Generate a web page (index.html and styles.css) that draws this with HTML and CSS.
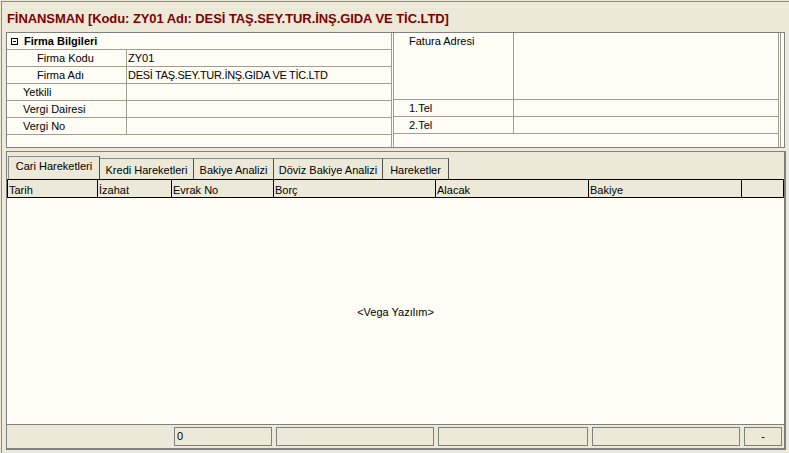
FILE: index.html
```html
<!DOCTYPE html>
<html lang="tr">
<head>
<meta charset="utf-8">
<title>Finansman</title>
<link rel="stylesheet" href="styles.css">
</head>
<body>
<div class="window">
  <div class="title">FİNANSMAN [Kodu: ZY01 Adı: DESİ TAŞ.SEY.TUR.İNŞ.GIDA VE TİC.LTD]</div>
  <div class="info">
    <div class="pgrid pleft">
      <div class="cat"><span class="tog"></span>Firma Bilgileri</div>
      <div class="row"><div class="lab sub">Firma Kodu</div><div class="val">ZY01</div></div>
      <div class="row"><div class="lab sub">Firma Adı</div><div class="val caps">DESİ TAŞ.SEY.TUR.İNŞ.GIDA VE TİC.LTD</div></div>
      <div class="row"><div class="lab">Yetkili</div><div class="val"></div></div>
      <div class="row"><div class="lab">Vergi Dairesi</div><div class="val"></div></div>
      <div class="row"><div class="lab">Vergi No</div><div class="val"></div></div>
      <div class="fill"></div>
    </div>
    <div class="pgrid pright">
      <div class="row tall"><div class="lab">Fatura Adresi</div><div class="val"></div></div>
      <div class="row"><div class="lab">1.Tel</div><div class="val"></div></div>
      <div class="row"><div class="lab">2.Tel</div><div class="val"></div></div>
      <div class="fill"></div>
    </div>
    <div class="vscroll"></div>
  </div>
  <div class="tabpanel">
    <div class="tabstrip">
      <div class="tab active t1">Cari Hareketleri</div>
      <div class="tab t2">Kredi Hareketleri</div>
      <div class="tab t3">Bakiye Analizi</div>
      <div class="tab t4">Döviz Bakiye Analizi</div>
      <div class="tab t5">Hareketler</div>
    </div>
    <div class="ghead">
      <div class="hc c1">Tarih</div>
      <div class="hc c2">İzahat</div>
      <div class="hc c3">Evrak No</div>
      <div class="hc c4">Borç</div>
      <div class="hc c5">Alacak</div>
      <div class="hc c6">Bakiye</div>
      <div class="hc c7"></div>
    </div>
    <div class="gbody">&lt;Vega Yazılım&gt;</div>
    <div class="gfoot">
      <div class="fp f1">0</div>
      <div class="fp f2"></div>
      <div class="fp f3"></div>
      <div class="fp f4"></div>
      <div class="fp f5">-</div>
    </div>
  </div>
</div>
</body>
</html>
```

FILE: styles.css
```css
* { box-sizing: border-box; }
html, body { margin: 0; padding: 0; }
body {
  background: #ECE9D8;
  font-family: "Liberation Sans", Arial, sans-serif;
  font-size: 11px;
  color: #000;
  width: 789px;
  height: 453px;
  overflow: hidden;
}
.window {
  margin: 1px 0 0 1px;
  border-top: 1px solid #8a8a8a;
  border-left: 1px solid #8a8a8a;
  height: 452px;
}
.title {
  height: 30px;
  padding: 9px 0 0 5px;
  font-size: 13px;
  line-height: 16px;
  font-weight: bold;
  letter-spacing: -0.07px;
  color: #800000;
  white-space: nowrap;
}
.info {
  margin-left: 4px;
  width: 779px;
  height: 116px;
  border: 1px solid #808080;
  background: #FFFDF6;
  display: flex;
}
.pgrid {
  display: flex;
  flex-direction: column;
  border-right: 1px solid #A39D90;
}
.pleft { width: 385px; }
.pright { width: 386px; margin-left: 1px; border-left: 1px solid #A39D90; }
.vscroll {
  width: 4px;
  margin-left: 1px;
  border-left: 1px solid #A39D90;
}
.cat {
  height: 17px;
  border-bottom: 1px solid #A39D90;
  font-weight: bold;
  line-height: 16px;
  padding-left: 3px;
  display: flex;
  align-items: center;
  gap: 6px;
}
.tog {
  width: 7px;
  height: 7px;
  border: 1px solid #000;
  position: relative;
  margin-left: 1px;
}
.tog::after {
  content: "";
  position: absolute;
  left: 1px;
  top: 2px;
  width: 3px;
  height: 1px;
  background: #000;
}
.row {
  display: flex;
  height: 17px;
  border-bottom: 1px solid #A39D90;
  line-height: 16px;
}
.row.tall { height: 67px; }
.lab {
  width: 120px;
  flex: none;
  border-right: 1px solid #A39D90;
  padding-left: 16px;
  white-space: nowrap;
}
.lab.sub { padding-left: 30px; }
.pright .lab { padding-left: 15px; }
.val {
  flex: 1;
  padding-left: 1px;
  white-space: nowrap;
}
.val.caps { letter-spacing: -0.3px; }
.fill { flex: 1; }

.tabpanel {
  margin: 3px 0 0 4px;
  width: 780px;
  height: 299px;
  border-left: 1px solid #808080;
  border-top: 1px solid #808080;
  border-right: 2px solid #808080;
  border-bottom: 2px solid #808080;
  display: flex;
  flex-direction: column;
}
.tabstrip {
  height: 27px;
  display: flex;
  align-items: flex-end;
  padding-left: 1px;
  flex: none;
}
.tab {
  height: 21px;
  border-top: 1px solid #8a8a8a;
  border-right: 1px solid #505050;
  text-align: center;
  line-height: 16px;
  padding-top: 3px;
  white-space: nowrap;
}
.tab.active {
  height: 23px;
  border-left: 1px solid #8a8a8a;
  padding-top: 1px;
}
.t1 { width: 92px; }
.t2 { width: 94px; }
.t3 { width: 80px; }
.t4 { width: 109px; }
.t5 { width: 66px; }

.ghead {
  display: flex;
  height: 19px;
  border-top: 1px solid #000;
  border-bottom: 1px solid #000;
  border-left: 1px solid #000;
  flex: none;
}
.hc {
  border-right: 1px solid #000;
  line-height: 13px;
  padding: 4px 0 0 1px;
  white-space: nowrap;
}
.c1 { width: 90px; }
.c2 { width: 74px; }
.c3 { width: 102px; }
.c4 { width: 162px; }
.c5 { width: 153px; }
.c6 { width: 153px; }
.c7 { flex: 1; }

.gbody {
  flex: 1;
  background: #FFFDF6;
  display: flex;
  align-items: center;
  justify-content: center;
  padding-top: 2px;
}
.gfoot {
  height: 24px;
  border-top: 1px solid #808080;
  display: flex;
  padding: 2px 0 0 167px;
  gap: 4px;
  flex: none;
}
.fp {
  height: 19px;
  border: 1px solid #808080;
  line-height: 17px;
  padding-left: 2px;
}
.f1 { width: 98px; }
.f2 { width: 158px; }
.f3 { width: 150px; }
.f4 { width: 148px; }
.f5 { width: 38px; text-align: center; padding-left: 0; }
```
